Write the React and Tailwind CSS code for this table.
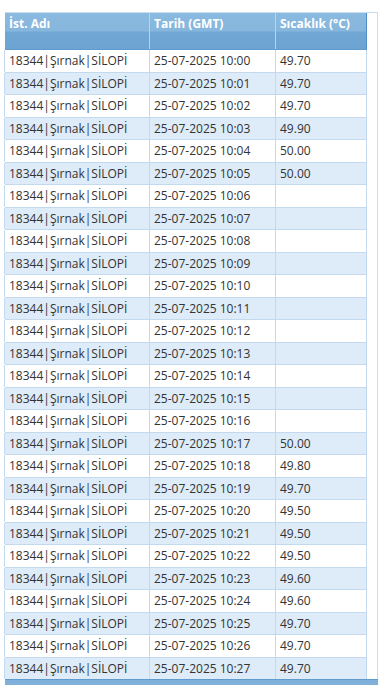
import React from "react";

const temps = {
  "10:00": "49.70", "10:01": "49.70", "10:02": "49.70", "10:03": "49.90", "10:04": "50.00", "10:05": "50.00",
  "10:17": "50.00", "10:18": "49.80", "10:19": "49.70", "10:20": "49.50", "10:21": "49.50", "10:22": "49.50",
  "10:23": "49.60", "10:24": "49.60", "10:25": "49.70", "10:26": "49.70", "10:27": "49.70",
};

const rows = Array.from({ length: 28 }, (_, i) => {
  const t = `10:${String(i).padStart(2, "0")}`;
  return { t, v: temps[t] || "" };
});

export default function App() {
  return (
    <div className="w-[378px] h-[685px] bg-white overflow-hidden relative" style={{ fontFamily: '"Open Sans", "DejaVu Sans", sans-serif' }}>
      <div className="pt-[12px] pl-[5px]">
        <div className="w-[373px] border-t border-r border-[#c9ddef]">
          <div className="w-[362px]">
            <div className="grid grid-cols-[145px_126px_1fr] h-[37px] border-b border-[#5f9bcc] bg-[linear-gradient(to_bottom,#8bbae0_0px,#87b6dd_18px,#70a7d4_19px,#6ba3d2_36px)]">
              <div className="border-r border-[#b9d4ea] px-[4px] pt-[3px] text-[12px] font-bold text-white leading-[16px]">İst. Adı</div>
              <div className="border-r border-[#b9d4ea] px-[4px] pt-[3px] text-[12px] font-bold text-white leading-[16px]">Tarih (GMT)</div>
              <div className="border-r border-[#4f8fc4] px-[4px] pt-[3px] text-[12px] font-bold text-white leading-[16px]">Sıcaklık (°C)</div>
            </div>
            {rows.map((r, i) => (
              <div
                key={r.t}
                className={`grid grid-cols-[145px_126px_1fr] h-[22.5px] border-b border-[#c3d9ee] text-[12px] text-[#333] leading-[21px] ${i % 2 === 0 ? "bg-white" : "bg-[#deebf8]"}`}
              >
                <div className="border-r border-l border-[#c3d9ee] pl-[4px] -ml-px whitespace-nowrap">18344|Şırnak|SİLOPİ</div>
                <div className="border-r border-[#c3d9ee] pl-[4px] whitespace-nowrap">25-07-2025 {r.t}</div>
                <div className="border-r border-[#c3d9ee] pl-[4px]">{r.v}</div>
              </div>
            ))}
          </div>
        </div>
      </div>
      <div className="absolute left-[5px] right-0 top-[679px] h-[6px] bg-[#7fb0da] border-t border-[#5f9bcc]"></div>
    </div>
  );
}
